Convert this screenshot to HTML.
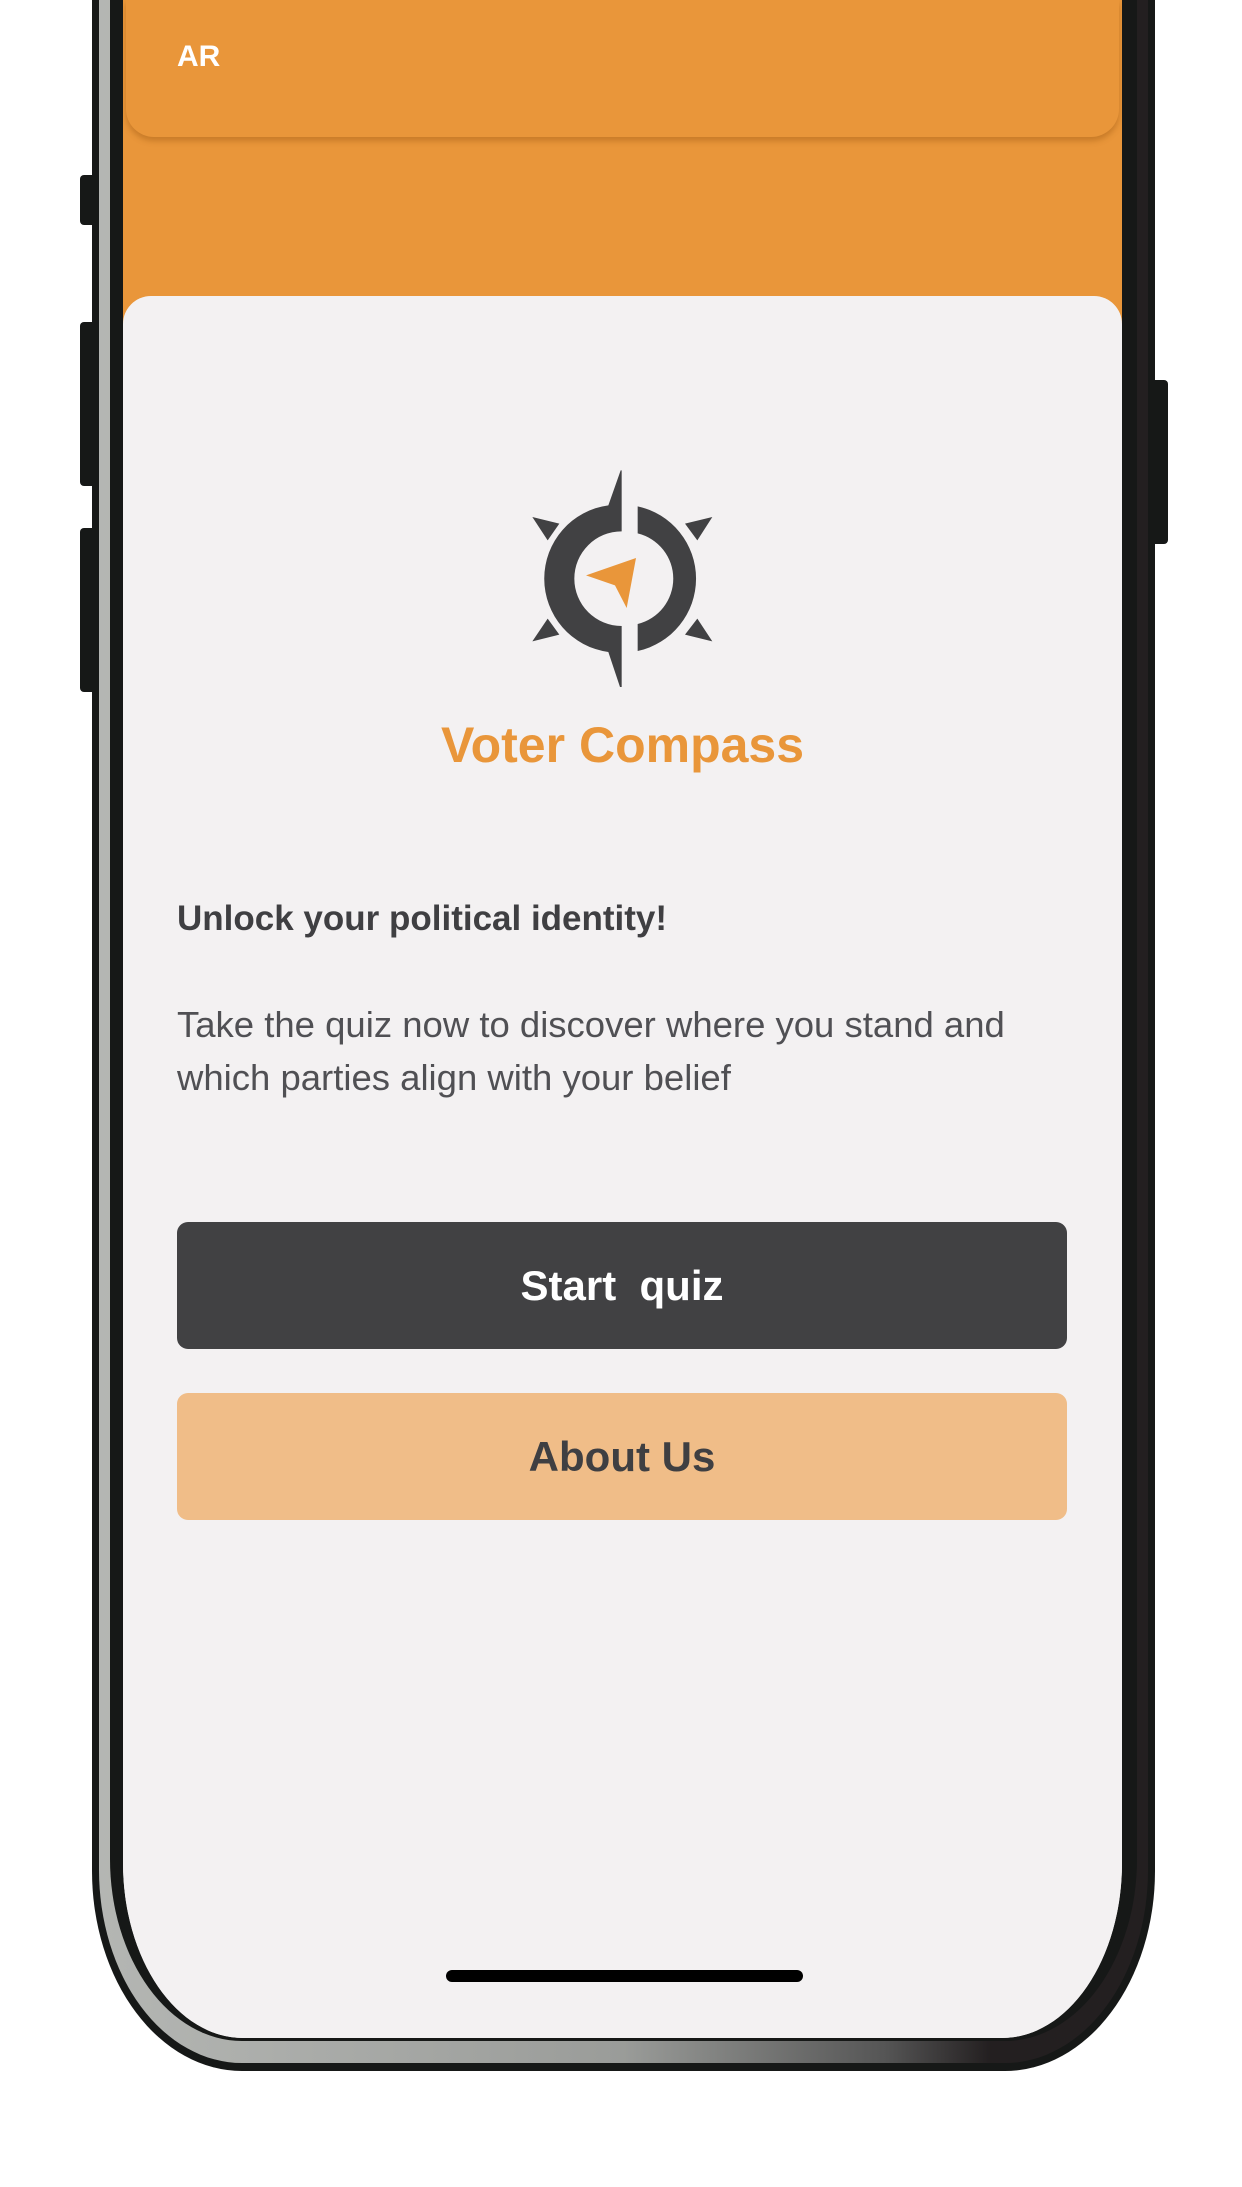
<!DOCTYPE html>
<html><head><meta charset="utf-8"><style>
*{margin:0;padding:0;box-sizing:border-box}
body{width:1242px;height:2187px;background:#fff;position:relative;overflow:hidden;font-family:"Liberation Sans",sans-serif}
.btnside{position:absolute;background:#161817;border-radius:4px}
.frame{position:absolute;left:92px;top:-60px;width:1063px;height:2139px;background:#161817;border-radius:0 0 150px 150px/0 0 200px 200px}
.band{position:absolute;left:7px;top:0;right:7px;bottom:8px;background:linear-gradient(90deg,#b4b6b3 0%,#9a9c99 50%,#555 75%,#231f20 85%);border-radius:0 0 143px 143px/0 0 193px 193px}
.inner{position:absolute;left:18px;top:0;right:18px;bottom:30px;background:#161817;border-radius:0 0 132px 132px/0 0 182px 182px}
.screen{position:absolute;left:123px;top:0;width:999px;height:2046px;background:#f3f1f2;border-radius:0 0 120px 120px/0 0 175px 175px;overflow:hidden}
.orange{position:absolute;left:0;top:0;width:100%;height:330px;background:#e9963a}
.hdr{position:absolute;left:3px;top:0;width:993px;height:137px;background:#e9963a;border-radius:0 0 28px 28px;box-shadow:0 4px 6px rgba(160,90,20,.45)}
.ar{position:absolute;left:51px;top:40px;color:#fff;font-weight:bold;font-size:30px}
.sheet{position:absolute;left:0;top:296px;width:100%;height:1800px;background:#f3f1f2;border-radius:28px 28px 0 0}
.title{position:absolute;left:0;width:100%;top:716px;text-align:center;color:#e9963a;font-weight:bold;font-size:50px}
.h{position:absolute;left:54px;top:899px;font-weight:bold;font-size:35px;color:#3f3f42}
.p{position:absolute;left:54px;top:998px;font-size:36.5px;line-height:53px;color:#505054;width:900px}
.b{position:absolute;left:54px;width:890px;height:127px;border-radius:11px;text-align:center;line-height:127px;font-weight:bold;font-size:42px}
.home{position:absolute;left:323px;top:1981px;width:357px;height:12px;background:#000;border-radius:6px}
</style></head><body>
<div class="btnside" style="left:80px;top:175px;width:16px;height:50px"></div>
<div class="btnside" style="left:80px;top:322px;width:16px;height:164px"></div>
<div class="btnside" style="left:80px;top:528px;width:16px;height:164px"></div>
<div class="btnside" style="left:1150px;top:380px;width:18px;height:164px"></div>
<div class="frame" style="height:2131px"><div class="band"></div><div class="inner"></div></div>
<div class="screen" style="height:2038px">
<div class="orange"></div>
<div class="hdr"><div class="ar">AR</div></div>
<div class="sheet"></div>
<svg style="position:absolute;left:377px;top:452px" width="260" height="260" viewBox="0 0 780 780">
<g fill="#414143">
<path d="M362,55 L365,55 L365,238 A140,140 0 0 0 365,522 L365,705 L360,705 L325,600 A222,222 0 0 1 325,160 Z"/>
<path d="M413,163 A222,222 0 0 1 413,597 L413,516 A140,140 0 0 0 413,244 Z"/>
<path d="M97,195 L178,215 L143,265 Z"/>
<path d="M637,195 L555,215 L592,265 Z"/>
<path d="M97,568 L178,548 L143,500 Z"/>
<path d="M637,568 L555,548 L592,500 Z"/>
</g>
<path fill="#e9963a" d="M258,370 L408,318 L380,468 L345,400 Z"/>
</svg>
<div class="title">Voter Compass</div>
<div class="h">Unlock your political identity!</div>
<div class="p">Take the quiz now to discover where you stand and which parties align with your belief</div>
<div class="b" style="top:1222px;background:#414143;color:#fff">Start&nbsp; quiz</div>
<div class="b" style="top:1393px;background:#f0bd88;color:#3f3f42">About Us</div>
<div class="home" style="top:1970px"></div>
</div>
</body></html>
